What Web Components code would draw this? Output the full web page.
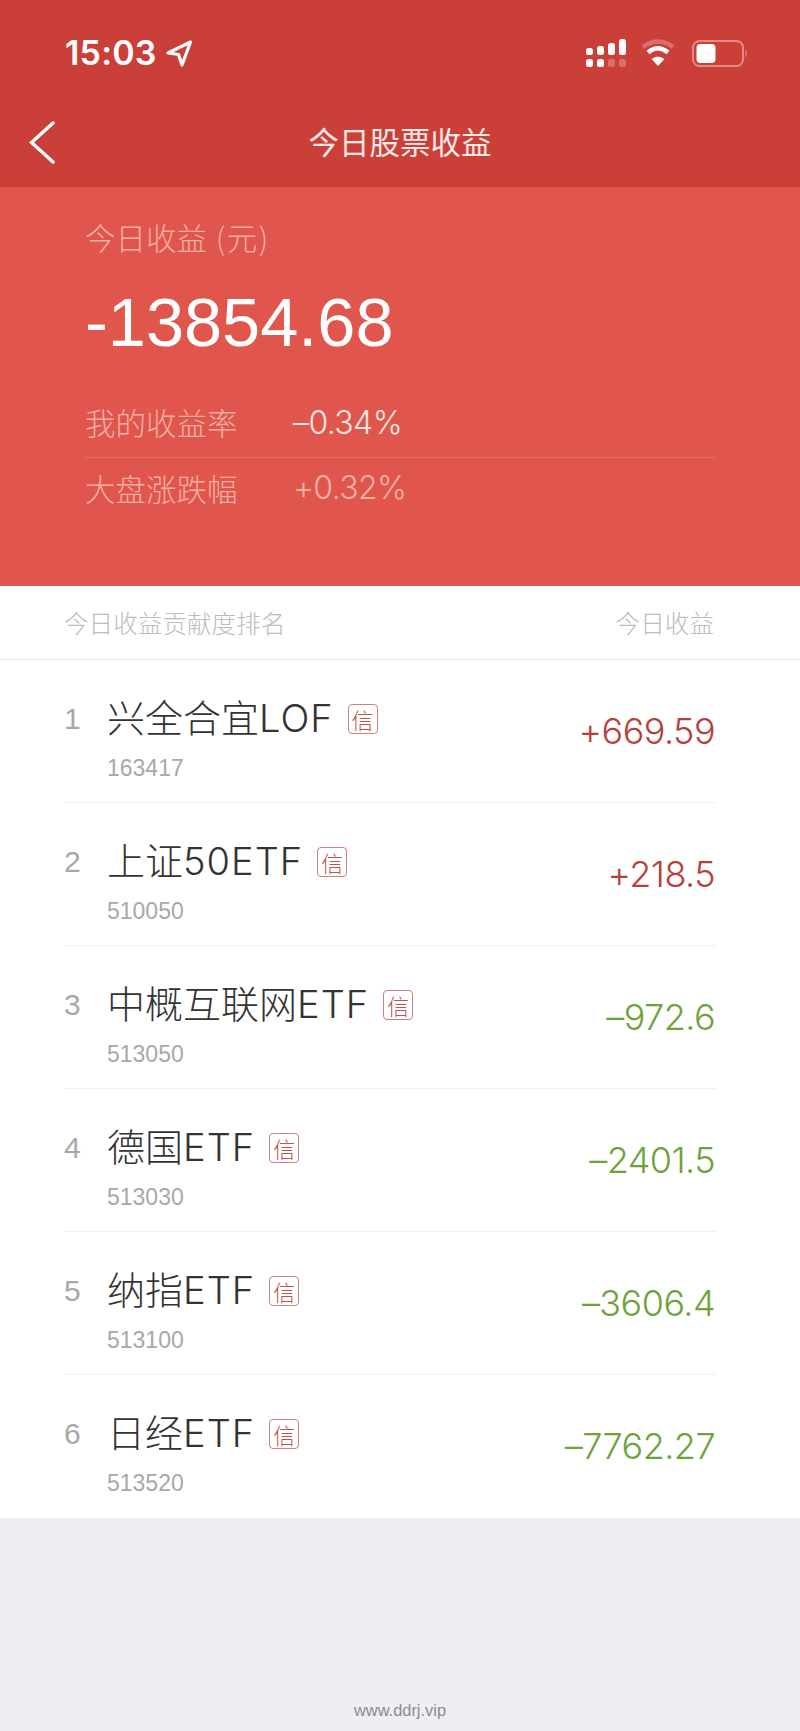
<!DOCTYPE html>
<html lang="zh">
<head>
<meta charset="utf-8">
<title>今日股票收益</title>
<style>
  html, body { margin: 0; padding: 0; }
  body {
    width: 800px;
    height: 1731px;
    background: #eeeef3;
    font-family: "Liberation Sans", "Noto Sans CJK SC", sans-serif;
    overflow: hidden;
  }
</style>
</head>
<body>
<app-page>
  <status-bar slot="top"></status-bar>
  <nav-bar slot="top">今日股票收益</nav-bar>
  <income-summary slot="top" total="-13854.68">
    <summary-row label="我的收益率" value="–0.34%" bright></summary-row>
    <summary-row label="大盘涨跌幅" value="+0.32%"></summary-row>
  </income-summary>
  <rank-list>
    <rank-row rank="1" code="163417" value="+669.59" dir="up">兴全合宜<span>LOF</span></rank-row>
    <rank-row rank="2" code="510050" value="+218.5" dir="up">上证<span>50ETF</span></rank-row>
    <rank-row rank="3" code="513050" value="–972.6" dir="down">中概互联网<span>ETF</span></rank-row>
    <rank-row rank="4" code="513030" value="–2401.5" dir="down">德国<span>ETF</span></rank-row>
    <rank-row rank="5" code="513100" value="–3606.4" dir="down">纳指<span>ETF</span></rank-row>
    <rank-row rank="6" code="513520" value="–7762.27" dir="down">日经<span>ETF</span></rank-row>
  </rank-list>
  <page-footer>www.ddrj.vip</page-footer>
</app-page>

<script>
  const define = (name, render) => {
    customElements.define(name, class extends HTMLElement {
      constructor() {
        super();
        this.attachShadow({mode: 'open'});
      }
      connectedCallback() {
        this.shadowRoot.innerHTML = render(this);
      }
    });
  };

  define('app-page', () => `
    <style>
      :host { display: flex; flex-direction: column; height: 1731px; }
      header { background: #cb3f39; }
    </style>
    <header><slot name="top"></slot></header>
    <slot></slot>
  `);

  define('status-bar', () => `
    <style>
      :host {
        display: flex;
        align-items: flex-start;
        height: 100px;
        box-sizing: border-box;
        padding: 36px 49px 0 65px;
        color: #fff;
      }
      .time {
        font: 600 34px/34px Inter, sans-serif;
        letter-spacing: 0.2px;
      }
      .arrow { margin: 3px 0 0 8px; }
      .right { margin-left: auto; display: flex; }
      svg { display: block; }
    </style>
    <span class="time">15:03</span>
    <svg class="arrow" width="28" height="29" viewBox="0 0 28 29" fill="none" stroke="#fff" stroke-width="3.200" stroke-linejoin="round">
      <path d="M25.500 3 L3 14 L13.500 15.500 L17 26 Z"/>
    </svg>
    <svg class="right" width="165" height="34" viewBox="585 36 165 34" fill="#fff">
      <rect x="585" y="48" width="7" height="7" rx="2.5"/>
      <rect x="596" y="46" width="7" height="9" rx="2.5"/>
      <rect x="607" y="43" width="7" height="12" rx="2.5"/>
      <rect x="618" y="39" width="7" height="16" rx="2.5"/>
      <rect x="585" y="59" width="7" height="8" rx="2.5"/>
      <rect x="596" y="59" width="7" height="8" rx="2.5"/>
      <rect x="607" y="59" width="7" height="8" rx="2.5" opacity=".25"/>
      <rect x="618" y="59" width="7" height="8" rx="2.5" opacity=".25"/>
      <path d="M642 47 Q657 36 672 47" fill="none" stroke="#fff" stroke-opacity=".25" stroke-width="4.5"/>
      <path d="M647 52.500 Q657 44 667 52.500" fill="none" stroke="#fff" stroke-width="4.5"/>
      <path d="M650.500 59 Q657 54 663.500 59 L657 66 Z"/>
      <rect x="692" y="41" width="50" height="25" rx="6.500" fill="none" stroke="#fff" stroke-opacity=".4" stroke-width="2"/>
      <rect x="695.500" y="44" width="19" height="19" rx="4"/>
      <path d="M744.500 49.500 Q747.500 53.500 744.500 57.500 Z" fill-opacity=".4"/>
    </svg>
  `);

  define('nav-bar', () => `
    <style>
      :host {
        display: block;
        position: relative;
        height: 87px;
        color: #fbe9e7;
        font: 400 30.500px/83px "Noto Sans CJK SC", sans-serif;
        text-align: center;
      }
      svg { position: absolute; left: 29px; top: 21px; }
    </style>
    <svg width="26" height="43" viewBox="0 0 26 43" fill="none" stroke="#fff" stroke-width="3.500" stroke-linecap="round">
      <path d="M24 2 L2.500 21.500 L24 41"/>
    </svg>
    <slot></slot>
  `);

  define('income-summary', (el) => `
    <style>
      :host {
        display: block;
        height: 399px;
        box-sizing: border-box;
        padding: 27px 85px 0 85px;
        background: #e0564c;
      }
      .label {
        color: #f5aea5;
        font: 300 30.500px/46px "Noto Sans CJK SC", sans-serif;
      }
      .paren { margin-left: 2px; letter-spacing: 1.500px; }
      .total {
        margin-top: 24px;
        color: #fff;
        font-size: 68.500px;
        line-height: 78px;
      }
      .rows { margin-top: 31px; }
    </style>
    <div class="label">今日收益 <span class="paren">(元)</span></div>
    <div class="total">${el.getAttribute('total')}</div>
    <div class="rows"><slot></slot></div>
  `);

  define('summary-row', (el) => `
    <style>
      :host {
        display: flex;
        align-items: center;
        box-sizing: border-box;
        height: 65px;
        padding-bottom: 5px;
        font: 300 32px/1 Inter, sans-serif;
        letter-spacing: -0.6px;
        color: ${el.hasAttribute('bright') ? '#fde6e2' : '#f5aea5'};
      }
      :host([bright]) { border-bottom: 1px solid #e86f65; }
      .label {
        width: 208px;
        color: #f5aea5;
        letter-spacing: 0;
        font: 300 30.500px/1 "Noto Sans CJK SC", sans-serif;
      }
    </style>
    <span class="label">${el.getAttribute('label')}</span>
    <span>${el.getAttribute('value')}</span>
  `);

  define('rank-list', () => `
    <style>
      :host { display: block; background: #fff; }
      .head {
        display: flex;
        justify-content: space-between;
        align-items: center;
        height: 73px;
        padding: 0 86px 0 64px;
        border-bottom: 1px solid #e9e9ec;
        color: #bcbcbc;
        font: 300 24.600px/1 "Noto Sans CJK SC", sans-serif;
      }
      ::slotted(rank-row:last-child) { --row-line: transparent; }
    </style>
    <div class="head"><span>今日收益贡献度排名</span><span>今日收益</span></div>
    <slot></slot>
  `);

  define('rank-row', (el) => `
    <style>
      :host {
        display: flex;
        height: 143px;
        box-sizing: border-box;
        margin: 0 84px 0 64px;
        padding-right: 1px;
        border-bottom: 1px solid var(--row-line, #f0f0f2);
      }
      .rank {
        width: 43px;
        padding-top: 40px;
        color: #a8a8a8;
        font-size: 30px;
        line-height: 38px;
      }
      .main { flex: 1; padding-top: 32px; }
      .name {
        display: flex;
        align-items: center;
        height: 52px;
        color: #333;
        font: 300 38px/52px Inter, "Noto Sans CJK SC", sans-serif;
      }
      ::slotted(span) { letter-spacing: 1px; }
      .badge {
        box-sizing: border-box;
        display: flex;
        align-items: center;
        justify-content: center;
        width: 30px;
        height: 30px;
        margin: 2px 0 0 14px;
        border: 1.500px solid #cf7f7f;
        border-radius: 4px;
        color: #c0524e;
        font: 300 22px/1 "Noto Sans CJK SC", sans-serif;
      }
      .code {
        margin-top: 8px;
        color: #a8a8a8;
        font-size: 23px;
        line-height: 32px;
      }
      .value {
        align-self: center;
        margin-top: 0;
        font: 300 36px/1 Inter, sans-serif;
        letter-spacing: -0.550px;
        color: ${el.getAttribute('dir') === 'up' ? '#b8403b' : '#6ea33c'};
      }
    </style>
    <div class="rank">${el.getAttribute('rank')}</div>
    <div class="main">
      <div class="name"><slot></slot><span class="badge">信</span></div>
      <div class="code">${el.getAttribute('code')}</div>
    </div>
    <div class="value">${el.getAttribute('value')}</div>
  `);

  define('page-footer', () => `
    <style>
      :host {
        display: block;
        flex: 1;
        box-sizing: border-box;
        padding-top: 182px;
        background: #eeeef3;
        color: #8b8b8f;
        font-size: 16.400px;
        line-height: 20px;
        text-align: center;
      }
    </style>
    <slot></slot>
  `);
</script>
</body>
</html>
